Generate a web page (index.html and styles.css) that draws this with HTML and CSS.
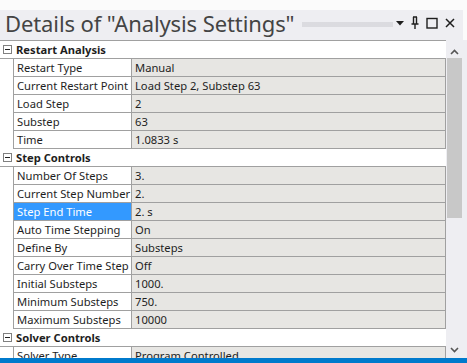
FILE: index.html
```html
<!DOCTYPE html>
<html lang="en">
<head>
    <meta charset="UTF-8">
    <title>Details of "Analysis Settings"</title>
    <link rel="stylesheet" href="styles.css">
</head>
<body>
<div class="panel">
    <div class="titlebar">
        <span class="title">Details of "Analysis Settings"</span>
        <span class="grip"></span>
        <span class="tools">
            <svg width="8" height="8" viewBox="0 0 8 8"><path d="M0 2h8L4 6.5z" fill="#1e1e1e"/></svg>
            <svg width="8" height="14" viewBox="0 0 8 14"><path d="M2 1h4M2.5 1v7M5.5 1v7M0.5 8h7M4 8v5" stroke="#1e1e1e" stroke-width="1.4" fill="none"/></svg>
            <svg width="12" height="12" viewBox="0 0 12 12"><rect x="1" y="1.5" width="10" height="9.5" stroke="#1e1e1e" stroke-width="1.4" fill="none"/></svg>
            <svg width="10" height="10" viewBox="0 0 10 10"><path d="M1 1l8 8M9 1l-8 8" stroke="#1e1e1e" stroke-width="1.5"/></svg>
        </span>
    </div>
    <div class="body">
        <div class="grid">
            <div class="row group"><span class="box"></span><span class="gname">Restart Analysis</span></div>
            <div class="row"><span class="pad"></span><span class="label">Restart Type</span><span class="value">Manual</span></div>
            <div class="row"><span class="pad"></span><span class="label">Current Restart Point</span><span class="value">Load Step 2, Substep 63</span></div>
            <div class="row"><span class="pad"></span><span class="label">Load Step</span><span class="value">2</span></div>
            <div class="row"><span class="pad"></span><span class="label">Substep</span><span class="value">63</span></div>
            <div class="row"><span class="pad"></span><span class="label">Time</span><span class="value">1.0833 s</span></div>
            <div class="row group"><span class="box"></span><span class="gname">Step Controls</span></div>
            <div class="row"><span class="pad"></span><span class="label">Number Of Steps</span><span class="value">3.</span></div>
            <div class="row"><span class="pad"></span><span class="label">Current Step Number</span><span class="value">2.</span></div>
            <div class="row"><span class="pad"></span><span class="label selected">Step End Time</span><span class="value">2. s</span></div>
            <div class="row"><span class="pad"></span><span class="label">Auto Time Stepping</span><span class="value">On</span></div>
            <div class="row"><span class="pad"></span><span class="label">Define By</span><span class="value">Substeps</span></div>
            <div class="row"><span class="pad"></span><span class="label">Carry Over Time Step</span><span class="value">Off</span></div>
            <div class="row"><span class="pad"></span><span class="label">Initial Substeps</span><span class="value">1000.</span></div>
            <div class="row"><span class="pad"></span><span class="label">Minimum Substeps</span><span class="value">750.</span></div>
            <div class="row"><span class="pad"></span><span class="label">Maximum Substeps</span><span class="value">10000</span></div>
            <div class="row group"><span class="box"></span><span class="gname">Solver Controls</span></div>
            <div class="row"><span class="pad"></span><span class="label">Solver Type</span><span class="value">Program Controlled</span></div>
        </div>
        <div class="scrollbar">
            <svg class="arrow" width="9" height="6" viewBox="0 0 9 6"><path d="M1 5l3.5-3.5L8 5" stroke="#555" stroke-width="1.6" fill="none"/></svg>
            <div class="thumb"></div>
            <svg class="arrow down" width="9" height="6" viewBox="0 0 9 6"><path d="M1 1l3.5 3.5L8 1" stroke="#555" stroke-width="1.6" fill="none"/></svg>
        </div>
    </div>
    <div class="status"></div>
</div>
</body>
</html>
```

FILE: styles.css
```css
body {
    margin: 0;
    font-family: "Segoe UI", "Noto Sans", sans-serif;
    color: #1e1e1e;
    background: #eeeef2;
}

.panel {
    width: 467px;
    height: 363px;
    display: flex;
    flex-direction: column;
    overflow: hidden;
    background: #eeeef2;
}

.titlebar {
    height: 40px;
    display: flex;
    align-items: center;
    padding: 0 0 4px 5px;
    box-sizing: border-box;
    border-top: 10px solid #fbfbfb;
    border-right: 4px solid #fbfbfb;
}

.title {
    font-size: 22px;
    color: #444;
    white-space: nowrap;
    letter-spacing: -0.1px;
}

.grip {
    flex: 1;
    height: 5px;
    margin: 3px 3px 0 8px;
    background-image: radial-gradient(circle, #c4c4ca 0.6px, transparent 0.8px);
    background-size: 2px 2px;
}

.tools {
    display: flex;
    align-items: center;
    gap: 7px;
    padding-right: 8px;
}

.body {
    flex: 1;
    display: flex;
    min-height: 0;
}

.grid {
    width: 446px;
    background: #fff;
    border-top: 1px solid #a0a0a0;
    overflow: hidden;
    font-size: 11.2px;
}

.row {
    display: grid;
    grid-template-columns: 13px 118px 1fr;
    height: 18px;
}

.row span {
    line-height: 17px;
    white-space: nowrap;
    overflow: hidden;
}

.pad {
    background: #fff;
}

.label {
    background: #fff;
    border-left: 1px solid #a0a0a0;
    border-bottom: 1px solid #a0a0a0;
    padding-left: 3px;
}

.label.selected {
    background: #3399ff;
    color: #fff;
}

.value {
    background: #e7e6e3;
    border-left: 1px solid #a0a0a0;
    border-bottom: 1px solid #a0a0a0;
    border-right: 1px solid #a0a0a0;
    padding-left: 3px;
}

.group {
    border-bottom: 1px solid #a0a0a0;
    height: 17px;
}

.group .gname {
    grid-column: 2 / 4;
    font-weight: bold;
    padding-left: 3px;
}

.row .box {
    position: relative;
    width: 7px;
    height: 7px;
    margin: 4px 0 0 3px;
    border: 1px solid #808080;
    background: #fff;
}

.box::after {
    content: "";
    position: absolute;
    left: 1px;
    top: 3px;
    width: 5px;
    height: 1px;
    background: #222;
}

.scrollbar {
    width: 21px;
    display: flex;
    flex-direction: column;
    align-items: flex-start;
    background: #eeeef2;
}

.arrow {
    margin: 9px 0 0 4px;
}

.arrow.down {
    margin: auto 0 5px 4px;
}

.thumb {
    width: 15px;
    height: 160px;
    margin: 3px 0 0 1px;
    background: #c8c8c8;
}

.status {
    height: 5px;
    background: #007acc;
}
```
